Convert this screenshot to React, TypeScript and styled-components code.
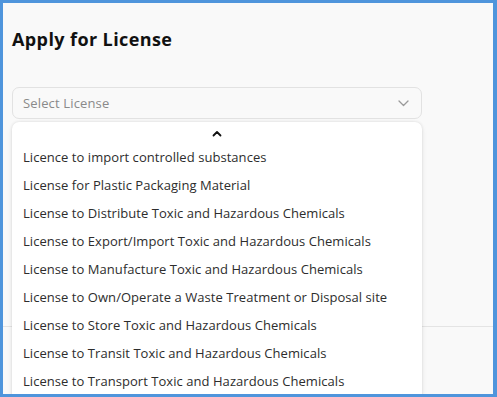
import React, { useState } from "react";
import styled, { createGlobalStyle } from "styled-components";

const licenses = [
    "Licence to import controlled substances",
    "License for Plastic Packaging Material",
    "License to Distribute Toxic and Hazardous Chemicals",
    "License to Export/Import Toxic and Hazardous Chemicals",
    "License to Manufacture Toxic and Hazardous Chemicals",
    "License to Own/Operate a Waste Treatment or Disposal site",
    "License to Store Toxic and Hazardous Chemicals",
    "License to Transit Toxic and Hazardous Chemicals",
    "License to Transport Toxic and Hazardous Chemicals",
];

const GlobalStyle = createGlobalStyle`
  html, body {
    margin: 0;
    padding: 0;
    overflow: hidden;
  }
  body {
    font-family: "Open Sans", "DejaVu Sans", sans-serif;
  }
`;

const ChevronDown = () => (
    <svg width="11" height="7" viewBox="0 0 11 7" fill="none">
        <path d="M1 1l4.5 4.5L10 1" stroke="#9a9a9a" strokeWidth="1.3" strokeLinecap="round" strokeLinejoin="round" />
    </svg>
);

const ChevronUp = () => (
    <svg width="10" height="7" viewBox="0 0 10 7" fill="none">
        <path d="M1.5 5.5L5 2l3.5 3.5" stroke="#111" strokeWidth="1.8" strokeLinecap="round" strokeLinejoin="round" />
    </svg>
);

const App: React.FC = () => {
    const [open, setOpen] = useState(true);
    const [value, setValue] = useState("");

    return (
        <>
            <GlobalStyle />
            <Frame>
                <Page>
                    <Section>
                        <Title>Apply for License</Title>
                        <SelectWrap>
                            <SelectBox onClick={() => setOpen(!open)}>
                                <Placeholder $filled={!!value}>{value || "Select License"}</Placeholder>
                                <ChevronDown />
                            </SelectBox>
                            {open && (
                                <Menu>
                                    <ScrollUp>
                                        <ChevronUp />
                                    </ScrollUp>
                                    {licenses.map((l) => (
                                        <Option
                                            key={l}
                                            onClick={() => {
                                                setValue(l);
                                                setOpen(false);
                                            }}
                                        >
                                            {l}
                                        </Option>
                                    ))}
                                </Menu>
                            )}
                        </SelectWrap>
                    </Section>
                </Page>
            </Frame>
        </>
    );
};

const Frame = styled.div`
  width: 497px;
  height: 397px;
  box-sizing: border-box;
  border: 3px solid #4f95dc;
  border-right-width: 4px;
  overflow: hidden;
`;

const Page = styled.div`
  height: 100%;
  background: #f9f9f9;
  display: flex;
  flex-direction: column;
`;

const Section = styled.div`
  height: 324px;
  box-sizing: border-box;
  border-bottom: 1px solid #e4e4e4;
  padding: 26px 71px 0 9px;
`;

const Title = styled.h1`
  margin: 0;
  font-size: 18px;
  line-height: 20px;
  font-weight: 700;
  letter-spacing: 0.4px;
  color: #111;
`;

const SelectWrap = styled.div`
  position: relative;
  margin-top: 38px;
`;

const SelectBox = styled.div`
  height: 32px;
  box-sizing: border-box;
  border: 1px solid #e2e2e2;
  border-radius: 7px;
  background: #f9f9f9;
  display: flex;
  align-items: center;
  justify-content: space-between;
  padding: 0 12px 0 10px;
  cursor: pointer;
`;

const Placeholder = styled.span<{ $filled: boolean }>`
  font-size: 13px;
  letter-spacing: 0.15px;
  color: ${(p) => (p.$filled ? "#222" : "#8a8a8a")};
`;

const Menu = styled.div`
  position: absolute;
  top: calc(100% + 3px);
  left: 0;
  right: 0;
  background: #fff;
  border-radius: 7px;
  box-shadow: 0 0 3px rgba(0, 0, 0, 0.12), 0 2px 6px rgba(0, 0, 0, 0.06);
  padding-bottom: 8px;
`;

const ScrollUp = styled.div`
  height: 21px;
  display: flex;
  align-items: center;
  justify-content: center;
  padding-top: 1px;
  box-sizing: border-box;
`;

const Option = styled.div`
  height: 28px;
  display: flex;
  align-items: center;
  padding-left: 11px;
  font-size: 13px;
  letter-spacing: 0.05px;
  color: #2d2d2d;
  white-space: nowrap;
  cursor: pointer;
`;

export default App;
